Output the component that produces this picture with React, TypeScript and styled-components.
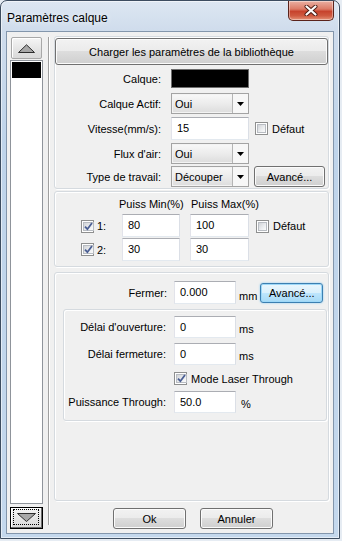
import React from "react";
import styled, { createGlobalStyle } from "styled-components";

const GlobalStyle = createGlobalStyle`
  html, body { margin: 0; padding: 0; }
  body {
    background: #e6ecf3;
    font-family: "Liberation Sans", Arial, sans-serif;
    font-size: 11px;
    color: #000;
  }
  * { box-sizing: border-box; }
`;

const Window = styled.div`
  width: 340px;
  height: 539px;
  border: 1px solid #3d4d60;
  border-radius: 7px 7px 0 0;
  background: linear-gradient(180deg, #dde7f2 0px, #cfdcec 30px, #bfd4ea 140px, #c4d8ed 100%);
  box-shadow: inset 0 0 0 1px rgba(255, 255, 255, 0.55);
  display: flex;
  flex-direction: column;
  padding: 0 5px 4px 5px;
`;

const TitleBar = styled.div`
  height: 30px;
  display: flex;
  align-items: flex-start;
`;

const Title = styled.div`
  font-size: 12px;
  line-height: 14px;
  padding: 10px 0 0 1px;
  text-shadow: 0 0 6px rgba(255, 255, 255, 0.9);
`;

const CloseButton = styled.div`
  margin-left: auto;
  width: 46px;
  height: 20px;
  border: 1px solid #5a231b;
  border-top: none;
  border-radius: 0 0 5px 5px;
  background: linear-gradient(180deg, #eab0a3 0%, #dc7b67 42%, #c7432d 55%, #cf5a40 78%, #e59379 100%);
  box-shadow: inset 0 0 0 1px rgba(255, 255, 255, 0.4);
  display: flex;
  align-items: center;
  justify-content: center;
`;

const Client = styled.div`
  flex: 1;
  background: #f0f0f0;
  border: 1px solid #8396ac;
  display: flex;
  padding: 4px 0 0 3px;
`;

const ListColumn = styled.div`
  width: 33px;
  margin-top: 1px;
  display: flex;
  flex-direction: column;
`;

const ScrollButton = styled.div<{ $default?: boolean; $mt?: number }>`
  height: 22px;
  margin-top: ${(p) => p.$mt ?? 0}px;
  border: 1px solid ${(p) => (p.$default ? "#000" : "#a8a8a8")};
  margin-left: ${(p) => (p.$default ? 0 : 1)}px;
  margin-right: ${(p) => (p.$default ? 0 : 1)}px;
  border-radius: ${(p) => (p.$default ? 0 : 2)}px;
  background: linear-gradient(180deg, #f5f5f5 0%, #e6e6e6 50%, #d9d9d9 100%);
  box-shadow: ${(p) =>
    p.$default ? "inset -1px -1px 0 #6d6d6d, inset 1px 1px 0 #fff" : "inset 1px 1px 0 #fff"};
  display: flex;
  align-items: center;
  justify-content: center;
  padding: ${(p) => (p.$default ? "1px 3px 3px 2px" : "0")};
`;

const FocusRect = styled.div`
  flex: 1;
  align-self: stretch;
  border: 1px dotted #000;
  display: flex;
  align-items: center;
  justify-content: center;
`;

const LayerList = styled.div`
  height: 444px;
  margin-top: 1px;
  background: #fff;
  border: 1px solid #8f949b;
  padding: 1px 1px;
`;

const LayerItem = styled.div<{ $color: string }>`
  height: 16px;
  background: ${(p) => p.$color};
`;

const Separator = styled.div`
  width: 2px;
  margin: 1px 0 8px 5px;
  border-left: 1px solid #a0a0a0;
  border-right: 1px solid #fff;
`;

const Main = styled.div`
  width: 275px;
  margin-left: 4px;
  display: flex;
  flex-direction: column;
`;

const Group = styled.div<{ $mt?: number; $ml?: number; $h: number; $w?: number }>`
  margin-top: ${(p) => p.$mt ?? 0}px;
  margin-left: ${(p) => p.$ml ?? 0}px;
  height: ${(p) => p.$h}px;
  width: ${(p) => (p.$w ? `${p.$w}px` : "auto")};
  border: 1px solid #d5dadf;
  border-radius: 3px;
  box-shadow: inset 1px 1px 0 #fff, 1px 1px 0 #fff;
  display: flex;
  flex-direction: column;
`;

const PushButton = styled.div<{ $w?: number; $h: number; $mt?: number; $ml?: number; $focused?: boolean }>`
  width: ${(p) => (p.$w ? `${p.$w}px` : "auto")};
  height: ${(p) => p.$h}px;
  margin-top: ${(p) => p.$mt ?? 0}px;
  margin-left: ${(p) => p.$ml ?? 0}px;
  flex-shrink: 0;
  border: 1px solid ${(p) => (p.$focused ? "#3c7fb1" : "#707070")};
  border-radius: 3px;
  background: ${(p) =>
    p.$focused
      ? "linear-gradient(180deg, #eaf6fd 0%, #d9f0fc 50%, #bee6fd 50%, #a7d9f5 100%)"
      : "linear-gradient(180deg, #f2f2f2 0%, #ebebeb 50%, #dddddd 50%, #cfcfcf 100%)"};
  box-shadow: ${(p) =>
    p.$focused ? "inset 0 0 0 1px #9ed8f8, 0 0 2px #7cc6f3" : "inset 0 0 0 1px #fbfbfb"};
  display: flex;
  align-items: center;
  justify-content: center;
  white-space: nowrap;
`;

const Row = styled.div<{ $mt: number; $h: number; $ml?: number }>`
  display: flex;
  align-items: center;
  height: ${(p) => p.$h}px;
  margin-top: ${(p) => p.$mt}px;
  margin-left: ${(p) => p.$ml ?? 0}px;
  flex-shrink: 0;
`;

const Label = styled.div<{ $w: number; $gap: number }>`
  width: ${(p) => p.$w}px;
  margin-right: ${(p) => p.$gap}px;
  text-align: right;
  white-space: nowrap;
  flex-shrink: 0;
`;

const Swatch = styled.div<{ $color: string }>`
  width: 78px;
  height: 19px;
  background: ${(p) => p.$color};
  border: 1px solid #6d6d6d;
`;

const TextBox = styled.div<{ $w: number; $h: number }>`
  width: ${(p) => p.$w}px;
  height: ${(p) => p.$h}px;
  background: #fff;
  border: 1px solid;
  border-color: #abadb3 #dbdfe6 #e3e9ef #e2e3ea;
  padding: 4px 0 0 5px;
  line-height: 13px;
  flex-shrink: 0;
`;

const Combo = styled.div`
  width: 78px;
  height: 21px;
  border: 1px solid #a3a3a3;
  background: #f3f3f3;
  display: flex;
  flex-shrink: 0;
`;

const ComboValue = styled.div`
  flex: 1;
  margin: 1px 0 1px 1px;
  padding-left: 2px;
  display: flex;
  align-items: center;
  background: linear-gradient(180deg, #f7f7f7 0%, #ececec 50%, #dedede 100%);
`;

const ComboArrow = styled.div`
  width: 16px;
  border-left: 1px solid #b5b5b5;
  background: #f7f7f7;
  display: flex;
  align-items: center;
  justify-content: center;
`;

const Unit = styled.div<{ $ml: number; $dy?: number }>`
  margin-left: ${(p) => p.$ml}px;
  padding-top: ${(p) => p.$dy ?? 0}px;
  white-space: nowrap;
`;

const CheckField = styled.label<{ $ml?: number }>`
  display: flex;
  align-items: center;
  gap: 4px;
  margin-left: ${(p) => p.$ml ?? 0}px;
  white-space: nowrap;
`;

const Box = styled.span`
  width: 13px;
  height: 13px;
  border: 1px solid #8e8f8f;
  background: #fff;
  padding: 1px;
  display: flex;
  flex-shrink: 0;
`;

const BoxFace = styled.span`
  flex: 1;
  display: flex;
  align-items: center;
  justify-content: center;
  background: linear-gradient(135deg, #d2d4d8 0%, #eceef0 60%, #fbfbfb 100%);
  border: 1px solid #b8bcc2;
`;

const PowerGrid = styled.div`
  display: grid;
  grid-template-columns: 16px 25px 68px 66px auto;
  grid-template-rows: 22px 24px 23px;
  padding-left: 26px;
  align-items: center;
`;

const HeaderCell = styled.div<{ $ml: number }>`
  margin-left: ${(p) => p.$ml}px;
  white-space: nowrap;
  padding-top: 1px;
`;

const GridCell = styled.div<{ $align?: string }>`
  align-self: ${(p) => p.$align ?? "center"};
  display: flex;
`;

const ButtonBar = styled.div`
  display: flex;
  gap: 14px;
  padding-left: 59px;
  margin-top: 7px;
`;

function CheckBox({ checked }: { checked?: boolean }) {
  return (
    <Box>
      <BoxFace>
        {checked && (
          <svg width="9" height="9" viewBox="0 0 9 9">
            <path d="M1 4.6 L3.4 7.2 L8 1" fill="none" stroke="#4b5f94" strokeWidth="1.8" />
          </svg>
        )}
      </BoxFace>
    </Box>
  );
}

function Check({ checked, label, ml }: { checked?: boolean; label: string; ml?: number }) {
  return (
    <CheckField $ml={ml}>
      <CheckBox checked={checked} />
      <span>{label}</span>
    </CheckField>
  );
}

function Dropdown({ value }: { value: string }) {
  return (
    <Combo>
      <ComboValue>{value}</ComboValue>
      <ComboArrow>
        <svg width="7" height="4" viewBox="0 0 7 4">
          <path d="M0 0 H7 L3.5 4 Z" fill="#000" />
        </svg>
      </ComboArrow>
    </Combo>
  );
}

export default function App() {
  return (
    <>
      <GlobalStyle />
      <Window>
        <TitleBar>
          <Title>Paramètres calque</Title>
          <CloseButton>
            <svg width="14" height="11" viewBox="0 0 14 11">
              <path d="M2.5 1.5 L11.5 9.5 M11.5 1.5 L2.5 9.5" stroke="#4a1a12" strokeWidth="4" strokeLinecap="round" />
              <path d="M2.5 1.5 L11.5 9.5 M11.5 1.5 L2.5 9.5" stroke="#fff" strokeWidth="2.2" strokeLinecap="round" />
            </svg>
          </CloseButton>
        </TitleBar>
        <Client>
          <ListColumn>
            <ScrollButton>
              <svg width="17" height="9" viewBox="0 0 17 9">
                <path d="M0.5 8.5 L8.5 0.8 L16.5 8.5 Z" fill="#a8a8a8" stroke="#2d2d2d" strokeWidth="1" />
              </svg>
            </ScrollButton>
            <LayerList>
              <LayerItem $color="#000" />
            </LayerList>
            <ScrollButton $default $mt={3}>
              <FocusRect>
                <svg width="19" height="9" viewBox="0 0 19 9">
                  <path d="M0.5 0.5 L18.5 0.5 L9.5 8.5 Z" fill="#a8a8a8" stroke="#2d2d2d" strokeWidth="1" />
                </svg>
              </FocusRect>
            </ScrollButton>
          </ListColumn>
          <Separator />
          <Main>
            <Group $h={153}>
              <PushButton $h={27} $mt={1}>
                Charger les paramètres de la bibliothèque
              </PushButton>
              <Row $mt={4} $h={19}>
                <Label $w={106} $gap={10}>Calque:</Label>
                <Swatch $color="#000" />
              </Row>
              <Row $mt={5} $h={21}>
                <Label $w={106} $gap={10}>Calque Actif:</Label>
                <Dropdown value="Oui" />
              </Row>
              <Row $mt={3} $h={23}>
                <Label $w={106} $gap={10}>Vitesse(mm/s):</Label>
                <TextBox $w={78} $h={23}>15</TextBox>
                <Check label="Défaut" ml={6} />
              </Row>
              <Row $mt={3} $h={21}>
                <Label $w={106} $gap={10}>Flux d'air:</Label>
                <Dropdown value="Oui" />
              </Row>
              <Row $mt={2} $h={21}>
                <Label $w={106} $gap={10}>Type de travail:</Label>
                <Dropdown value="Découper" />
                <PushButton $w={71} $h={21} $ml={5}>Avancé...</PushButton>
              </Row>
            </Group>

            <Group $h={76} $mt={2}>
              <PowerGrid>
                <span />
                <span />
                <HeaderCell $ml={-3}>Puiss Min(%)</HeaderCell>
                <HeaderCell $ml={1}>Puiss Max(%)</HeaderCell>
                <span />

                <CheckBox checked />
                <span>1:</span>
                <GridCell $align="start"><TextBox $w={58} $h={23}>80</TextBox></GridCell>
                <GridCell $align="start"><TextBox $w={59} $h={23}>100</TextBox></GridCell>
                <Check label="Défaut" />

                <CheckBox checked />
                <span>2:</span>
                <GridCell $align="start"><TextBox $w={58} $h={23}>30</TextBox></GridCell>
                <GridCell $align="start"><TextBox $w={59} $h={23}>30</TextBox></GridCell>
                <span />
              </PowerGrid>
            </Group>

            <Group $h={229} $mt={5}>
              <Row $mt={8} $h={23}>
                <Label $w={112} $gap={7}>Fermer:</Label>
                <TextBox $w={62} $h={23}>0.000</TextBox>
                <Unit $ml={3} $dy={6}>mm</Unit>
                <PushButton $w={63} $h={20} $ml={3} $focused>Avancé...</PushButton>
              </Row>
              <Group $h={112} $mt={5} $ml={8} $w={264}>
                <Row $mt={6} $h={22}>
                  <Label $w={102} $gap={8}>Délai d'ouverture:</Label>
                  <TextBox $w={62} $h={22}>0</TextBox>
                  <Unit $ml={3} $dy={3}>ms</Unit>
                </Row>
                <Row $mt={5} $h={22}>
                  <Label $w={102} $gap={8}>Délai fermeture:</Label>
                  <TextBox $w={62} $h={22}>0</TextBox>
                  <Unit $ml={3} $dy={3}>ms</Unit>
                </Row>
                <Row $mt={7} $h={13} $ml={110}>
                  <Check checked label="Mode Laser Through" />
                </Row>
                <Row $mt={6} $h={22}>
                  <Label $w={102} $gap={8}>Puissance Through:</Label>
                  <TextBox $w={62} $h={22}>50.0</TextBox>
                  <Unit $ml={5} $dy={3}>%</Unit>
                </Row>
              </Group>
            </Group>

            <ButtonBar>
              <PushButton $w={73} $h={21}>Ok</PushButton>
              <PushButton $w={73} $h={21}>Annuler</PushButton>
            </ButtonBar>
          </Main>
        </Client>
      </Window>
    </>
  );
}
